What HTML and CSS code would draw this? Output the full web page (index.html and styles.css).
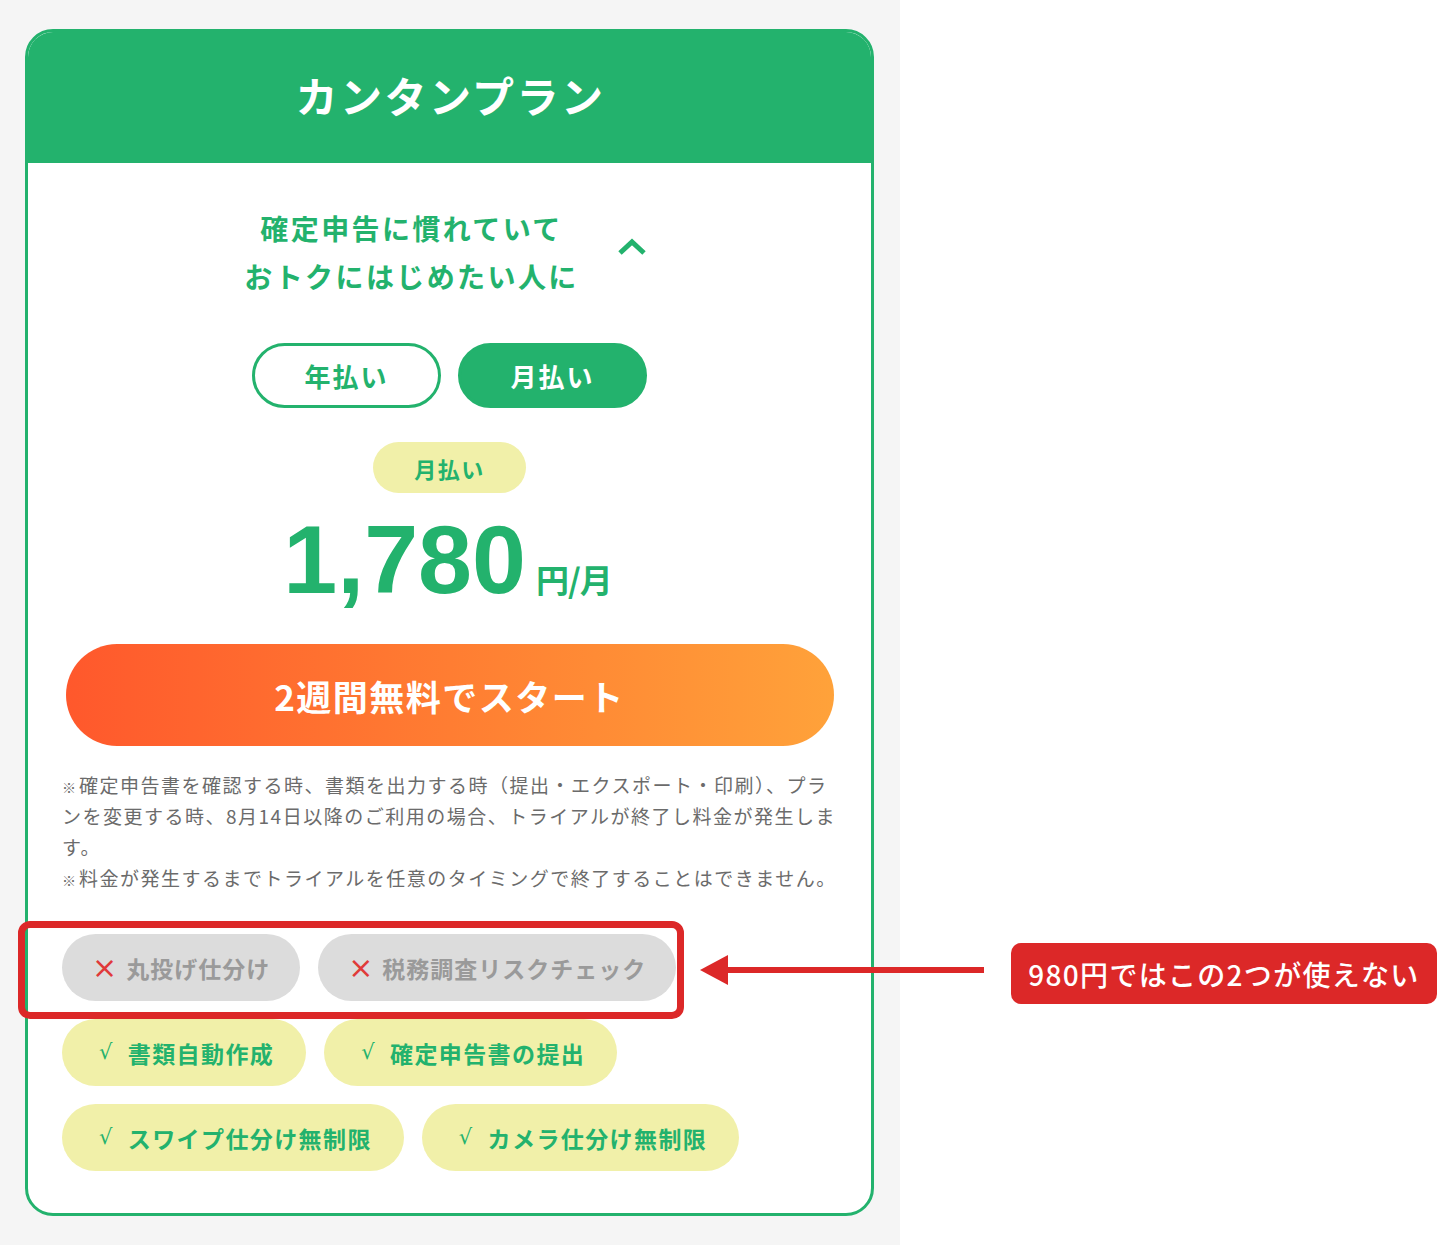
FILE: index.html
```html
<!DOCTYPE html>
<html lang="ja">
<head>
<meta charset="utf-8">
<link rel="stylesheet" href="styles.css">
</head>
<body>
<div class="page">
  <div class="stage">
    <section class="card">
      <header class="card-head">
        <h1 class="card-title">カンタンプラン</h1>
      </header>
      <div class="card-body">
        <div class="lead">
          <p class="lead-text">確定申告に慣れていて<br>おトクにはじめたい人に</p>
          <svg class="chevron" viewBox="0 0 30 20" width="30" height="20">
            <polyline points="3,16 15,5 27,16" fill="none" stroke="#23b26d" stroke-width="5" stroke-linejoin="miter"/>
          </svg>
        </div>
        <div class="toggle">
          <button class="toggle-btn">年払い</button>
          <button class="toggle-btn is-active">月払い</button>
        </div>
        <div class="badge">月払い</div>
        <div class="price">
          <span class="price-num">1,780</span>
          <span class="price-unit">円/月</span>
        </div>
        <button class="cta">2週間無料でスタート</button>
        <div class="notes">
          <p><span class="kome">※</span>確定申告書を確認する時、書類を出力する時（提出・エクスポート・印刷）、プランを変更する時、8月14日以降のご利用の場合、トライアルが終了し料金が発生します。</p>
          <p><span class="kome">※</span>料金が発生するまでトライアルを任意のタイミングで終了することはできません。</p>
        </div>
        <ul class="tags">
          <li class="tag tag-off"><span class="mark-x">×</span>丸投げ仕分け</li>
          <li class="tag tag-off"><span class="mark-x">×</span>税務調査リスクチェック</li>
          <li class="tag tag-on"><span class="mark-v">√</span>書類自動作成</li>
          <li class="tag tag-on"><span class="mark-v">√</span>確定申告書の提出</li>
          <li class="tag tag-on"><span class="mark-v">√</span>スワイプ仕分け無制限</li>
          <li class="tag tag-on"><span class="mark-v">√</span>カメラ仕分け無制限</li>
        </ul>
      </div>
    </section>
  </div>
  <div class="highlight"></div>
  <svg class="arrow" viewBox="0 0 284 32" width="284" height="32">
    <rect x="24" y="13" width="260" height="6" fill="#dc2828"/>
    <polygon points="0,16 28,1 28,31" fill="#dc2828"/>
  </svg>
  <div class="callout">980円ではこの2つが使えない</div>
</div>
</body>
</html>
```

FILE: styles.css
```css
* { box-sizing: border-box; }
html, body { margin: 0; padding: 0; background: #ffffff; }
body {
  font-family: "Noto Sans CJK JP", "Noto Sans", sans-serif;
  width: 1456px;
  height: 1245px;
  overflow: hidden;
}
.page {
  position: relative;
  width: 1456px;
  height: 1245px;
}
.stage {
  width: 900px;
  height: 1245px;
  background: #f5f5f5;
  padding: 29px 26px 0 25px;
}
.card {
  background: #ffffff;
  border: 3px solid #23b26d;
  border-radius: 28px;
  overflow: hidden;
  height: 1187px;
  display: flex;
  flex-direction: column;
}
.card-head {
  background: #23b26d;
  height: 131px;
  display: flex;
  align-items: center;
  justify-content: center;
  flex-shrink: 0;
}
.card-title {
  margin: 0;
  color: #ffffff;
  font-size: 42px;
  font-weight: 700;
  letter-spacing: 2.5px;
  line-height: 1;
  padding-left: 2px;
  transform: translateY(-3px);
}
.card-body {
  display: flex;
  flex-direction: column;
  align-items: center;
  padding: 41px 34px 0 34px;
}
.lead {
  display: flex;
  align-items: center;
  gap: 38px;
  margin-left: -8px;
}
.lead-text {
  margin: 0;
  color: #23b26d;
  font-size: 28px;
  font-weight: 700;
  letter-spacing: 2.4px;
  line-height: 48px;
  text-align: center;
}
.chevron {
  display: block;
  margin-top: -10px;
}
.toggle {
  display: flex;
  gap: 17px;
  margin-top: 43px;
}
.toggle-btn {
  width: 189px;
  height: 65px;
  border-radius: 33px;
  border: 3px solid #23b26d;
  background: #ffffff;
  color: #23b26d;
  font-family: "Noto Sans CJK JP", sans-serif;
  font-size: 26px;
  font-weight: 700;
  letter-spacing: 2px;
  padding: 0;
  line-height: 1;
}
.toggle-btn.is-active {
  background: #23b26d;
  color: #ffffff;
}
.badge {
  margin-top: 34px;
  width: 153px;
  height: 51px;
  border-radius: 26px;
  background: #f1f0a9;
  color: #23b26d;
  font-size: 22px;
  font-weight: 700;
  letter-spacing: 1.5px;
  display: flex;
  align-items: center;
  justify-content: center;
}
.price {
  margin-top: 19px;
  display: flex;
  align-items: baseline;
  color: #23b26d;
  margin-left: -4px;
}
.price-num {
  font-family: "Liberation Sans", Arial, sans-serif;
  font-weight: 700;
  font-size: 97px;
  line-height: 96px;
  letter-spacing: 0;
}
.price-unit {
  font-size: 33px;
  font-weight: 700;
  margin-left: 10px;
  letter-spacing: -1px;
}
.cta {
  margin-top: 36px;
  width: 768px;
  height: 102px;
  border: none;
  border-radius: 51px;
  background: linear-gradient(90deg, #ff582c 0%, #ff7d32 50%, #ffa23a 100%);
  color: #ffffff;
  font-family: "Noto Sans CJK JP", sans-serif;
  font-size: 35px;
  font-weight: 700;
  letter-spacing: 1.5px;
  padding: 0;
}
.notes {
  margin-top: 23px;
  align-self: flex-start;
  color: #6b6b6b;
  font-size: 19px;
  line-height: 31px;
  letter-spacing: 1.5px;
  width: 779px;
}
.notes p { margin: 0; }
.kome {
  display: inline-block;
  font-size: 14px;
  letter-spacing: 0;
  line-height: 1;
  margin-right: 3px;
}
.tags {
  list-style: none;
  margin: 41px 0 0 0;
  padding: 0;
  align-self: stretch;
  display: flex;
  flex-wrap: wrap;
  gap: 18px;
  max-width: 700px;
}
.tag {
  height: 67px;
  border-radius: 34px;
  display: flex;
  align-items: center;
  font-size: 23px;
  font-weight: 700;
  letter-spacing: 1px;
}
.tag-off {
  background: #dcdcdc;
  color: #9a9a9a;
  padding: 0 30px 0 30px;
}
.tag-on {
  background: #f1f0a9;
  color: #23b26d;
  padding: 0 32px 0 37px;
  letter-spacing: 1.4px;
}
.mark-x {
  color: #e03a3a;
  font-family: "DejaVu Sans", sans-serif;
  font-weight: 400;
  font-size: 30px;
  line-height: 1;
  margin-right: 8px;
}
.mark-v {
  font-family: "DejaVu Sans", sans-serif;
  font-weight: 400;
  font-size: 21px;
  line-height: 1;
  margin-right: 14px;
}
.highlight {
  position: absolute;
  left: 18px;
  top: 921px;
  width: 666px;
  height: 98px;
  border: 7px solid #dc2828;
  border-radius: 12px;
}
.arrow {
  position: absolute;
  left: 700px;
  top: 954px;
}
.callout {
  position: absolute;
  left: 1011px;
  top: 943px;
  width: 426px;
  height: 61px;
  border-radius: 10px;
  background: #dc2828;
  color: #ffffff;
  font-family: "Noto Sans CJK JP", sans-serif;
  font-size: 28px;
  font-weight: 500;
  letter-spacing: 1.3px;
  display: flex;
  align-items: center;
  justify-content: center;
}
```
